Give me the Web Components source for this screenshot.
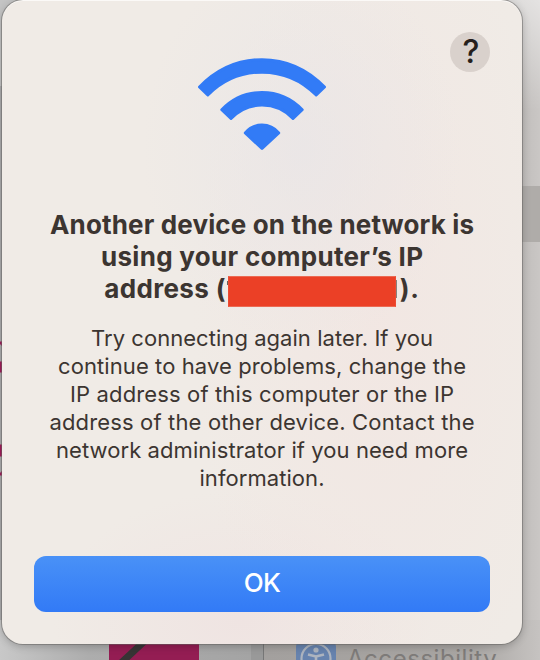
<!DOCTYPE html>
<html lang="en">
<head>
<meta charset="utf-8">
<title>Network alert</title>
<style>
html,body{margin:0;width:540px;height:660px;overflow:hidden;font-family:Inter,"Liberation Sans",sans-serif}
</style>
</head>
<body>
<desktop-backdrop>
  <alert-dialog>
    <help-button slot="help">?</help-button>
    <wifi-icon slot="icon"></wifi-icon>
    <alert-title slot="title">
      <fit-line width="424">Another device on the network is</fit-line>
      <fit-line width="322">using your computer’s IP</fit-line>
      <redacted-line><span slot="before">address (</span><span slot="after">).</span></redacted-line>
    </alert-title>
    <alert-message slot="message">
      <fit-line width="342">Try connecting again later. If you</fit-line>
      <fit-line width="408">continue to have problems, change the</fit-line>
      <fit-line width="384">IP address of this computer or the IP</fit-line>
      <fit-line width="425">address of the other device. Contact the</fit-line>
      <fit-line width="412">network administrator if you need more</fit-line>
      <fit-line width="125">information.</fit-line>
    </alert-message>
    <push-button slot="action">OK</push-button>
  </alert-dialog>
</desktop-backdrop>
<script>
const define=(name,html,ready)=>customElements.define(name,class extends HTMLElement{
  constructor(){super();this.attachShadow({mode:'open'}).innerHTML=html;}
  connectedCallback(){if(ready)ready(this);}
});

define('desktop-backdrop',`<style>
:host{display:block;position:relative;width:540px;height:660px;overflow:hidden;background:#b5b3b1}
svg{position:absolute;inset:0}
.label{position:absolute;left:347px;top:643px;font-size:24px;line-height:32px;letter-spacing:.55px;color:#7e7b79;white-space:nowrap}
</style>
<svg width="540" height="660" aria-hidden="true">
<defs>
<linearGradient id="r" x1="0" x2="1"><stop offset="0" stop-color="#b5b2b0"/><stop offset="1" stop-color="#cac7c5"/></linearGradient>
<linearGradient id="t" x1="0" x2="0" y1="0" y2="1"><stop offset="0" stop-color="#fff" stop-opacity=".5"/><stop offset="1" stop-color="#fff" stop-opacity="0"/></linearGradient>
<linearGradient id="b" x1="0" x2="1"><stop offset="0" stop-color="#c8c8c8"/><stop offset=".35" stop-color="#adadad"/><stop offset="1" stop-color="#a4a4a4"/></linearGradient>
<linearGradient id="br" x1="0" x2="1"><stop offset="0" stop-color="#a3a09e"/><stop offset=".75" stop-color="#a9a6a3"/><stop offset="1" stop-color="#c6c3c1"/></linearGradient>
</defs>
<rect width="20" height="660" fill="#adadaf"/>
<rect width="60" height="86" fill="#c4c4c4"/>
<rect x="500" width="40" height="660" fill="url(#r)"/>
<rect x="490" width="50" height="110" fill="url(#t)"/>
<rect x="520" y="186" width="20" height="56" fill="#afaca9"/>
<rect y="620" width="251" height="40" fill="url(#b)"/>
<rect x="251" y="620" width="12" height="40" fill="#999"/>
<rect x="263" y="620" width="1" height="40" fill="#777"/>
<rect x="264" y="620" width="276" height="40" fill="url(#br)"/>
<rect x="109" y="630" width="90" height="30" fill="#941d53"/>
<path d="M121 663L149 637" stroke="#373435" stroke-width="7"/>
<path d="M0 342l3 3M0 363h1v8H0zM0 446h1v9H0zM0 475l3-3" stroke="#a51d5b" stroke-width="3"/>
<rect x="296" y="638" width="40" height="40" rx="9" fill="#6783ae"/>
<g fill="none" stroke="#adb4bf" stroke-width="2.2"><circle cx="316" cy="658.500" r="14.5"/><path d="M308 654.500l8 2 8-2M316 657v8" stroke-width="2.6"/></g>
<circle cx="316" cy="650" r="2.6" fill="#adb4bf"/>
</svg>
<span class="label">Accessibility</span><slot></slot>`);

define('alert-dialog',`<style>
:host{box-sizing:border-box;position:relative;display:flex;flex-direction:column;align-items:center;width:520px;height:644px;margin-left:2px;padding:57px 32px 32px;border-radius:21px;background:
radial-gradient(ellipse 160px 200px at 300px 150px,rgba(232,229,231,.7),transparent),
radial-gradient(ellipse 190px 420px at 380px 320px,rgba(242,230,226,.85),transparent),
radial-gradient(ellipse 190px 130px at 240px 620px,rgba(239,226,225,.8),transparent),#f0ebe6;
box-shadow:inset 0 1px 0 #fbf9f7,0 0 0 1px rgba(100,98,96,.5),0 2px 9px rgba(0,0,0,.24)}
.help{position:absolute;right:32px;top:32px}
.title{margin-top:58px}.message{margin-top:19px}.action{margin-top:auto;width:100%}
</style><div class="help"><slot name="help"></slot></div><slot name="icon"></slot>
<div class="title"><slot name="title"></slot></div><div class="message"><slot name="message"></slot></div><div class="action"><slot name="action"></slot></div>`);

define('help-button',`<style>:host{box-sizing:border-box;display:flex;align-items:center;justify-content:center;width:40px;height:40px;padding-left:2px;border-radius:50%;background:#d9d1cc}
span{color:#261f1c;font-size:32px;line-height:42px;font-weight:500}</style><span><slot></slot></span>`);

define('wifi-icon',`<style>:host,svg{display:block;width:130px;height:94px}</style>
<svg viewBox="197 57 130 94" fill="#327bf6" stroke="#327bf6" stroke-width="3" stroke-linejoin="round" aria-hidden="true">
<path d="M199.5 87C235 50.5 289 50.5 324.500 87L316.200 95C286 64.500 238 64.500 207.800 95Z"/>
<path d="M221.800 109.700C244 86.700 280 86.700 302.200 109.700L293 118.500C276 100.500 248 100.500 231 118.500Z"/>
<path d="M245.300 133C254 122.400 270 122.400 278.700 133L262 148.500Z"/></svg>`);

define('alert-title',`<style>:host{display:flex;flex-direction:column;align-items:center;font-size:26px;line-height:32px;font-weight:700;color:#3c3531}</style><slot></slot>`);
define('alert-message',`<style>:host{display:flex;flex-direction:column;align-items:center;font-size:22px;line-height:28px;font-weight:430;color:#3c3531}</style><slot></slot>`);

/* A line of text whose tracking is adjusted to fill its width attribute. */
const fit=(el,width)=>{
  const n=el.textContent.length;
  el.style.letterSpacing='0px';
  const ls=(width-el.getBoundingClientRect().width)/(n-1);
  el.style.letterSpacing=ls+'px';
  el.style.marginRight=-ls+'px';
};
define('fit-line',`<style>:host{display:block;white-space:nowrap}</style><slot></slot>`,el=>fit(el,+el.getAttribute('width')));

define('redacted-line',`<style>:host{display:flex;height:32px;white-space:nowrap}
.head{letter-spacing:.35px}
.bar{box-sizing:border-box;width:168px;height:31px;margin-top:3px;background:#eb4026;border:1px solid #ec6a53;border-right-color:#ec4b33;border-left-color:#ec4b33}
.mark{width:1px;height:18px;margin-top:7px;background:#88827e;margin-right:3px}
.dot{width:1px;height:4px;margin:8px 0 0 1px;background:#68605c}
.tail{letter-spacing:.7px}
</style><span class="head"><slot name="before"></slot></span><i class="dot"></i><i class="bar"></i><i class="mark"></i><span class="tail"><slot name="after"></slot></span>`);

define('push-button',`<style>:host{box-sizing:border-box;display:flex;align-items:center;justify-content:center;height:56px;padding-bottom:2px;border-radius:12px;background:linear-gradient(#4991f7,#327af6);color:#fff;font-size:26px;font-weight:500;letter-spacing:-.6px;line-height:54px}</style><slot></slot>`);
</script>
</body>
</html>
